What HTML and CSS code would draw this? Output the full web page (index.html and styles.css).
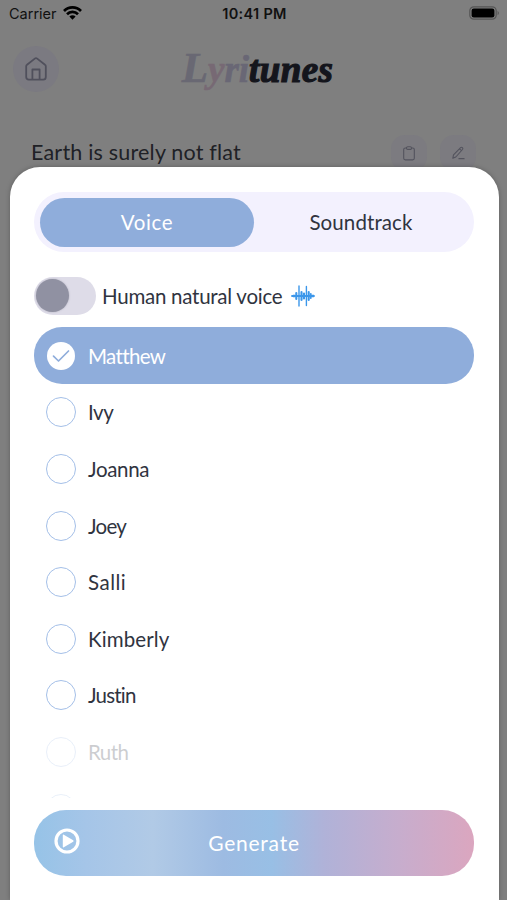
FILE: index.html
```html
<!DOCTYPE html>
<html lang="en">
<head>
<meta charset="utf-8">
<title>Lyritunes</title>
<link rel="stylesheet" href="styles.css">
</head>
<body>
<div class="page">
  <div class="status">
    <div class="carrier"><span>Carrier</span>
      <svg width="19" height="14" viewBox="0 0 19 14" fill="none" stroke="#000" stroke-width="2.7"><path d="M1 5a12 12 0 0 1 17 0M4 8.2a7.8 7.8 0 0 1 11 0"/><path d="M6.4 10.6a4.4 4.4 0 0 1 6.2 0L9.5 13.8z" fill="#000" stroke="none"/></svg>
    </div>
    <div class="time">10:41 PM</div>
    <svg class="battery" width="31" height="14" viewBox="0 0 31 14"><rect x=".8" y=".8" width="26.4" height="12.4" rx="4" fill="none" stroke="#555" stroke-width="1.2"/><rect x="2.6" y="2.6" width="22.8" height="8.8" rx="2.2"/><path d="M28.6 4.7q2.6 2.3 0 4.6z" fill="#555"/></svg>
  </div>
  <div class="header">
    <div class="home">
      <svg width="22" height="24" viewBox="0 0 22 24" fill="none" stroke="#50505c" stroke-width="1.8" stroke-linejoin="round"><path d="M1.2 9.3Q1.2 8.4 2 7.8L9.8 1.6q1.2-.9 2.4 0L20 7.8q.8.6.8 1.5V20q0 2.6-2.6 2.6H3.800Q1.2 22.6 1.2 20z"/><path d="M7.4 22.500V12.5h7.2v10"/></svg>
    </div>
    <div class="logo"><span class="logo-l">L</span><span class="logo-y">y</span><span class="logo-ri">ri</span><span class="logo-tunes">tunes</span></div>
    <div class="header-end"></div>
  </div>
  <div class="song">
    <div class="song-title">Earth is surely not flat</div>
    <div class="song-actions">
      <div class="mini"><svg width="12" height="15" viewBox="0 0 12 15" fill="none" stroke="#53535d" stroke-width="1.1"><path d="M3.5 2H2.3Q.7 2 .7 3.6v8.7q0 1.6 1.6 1.6h7.4q1.6 0 1.6-1.6V3.6Q11.3 2 9.7 2H8.5"/><rect x="3.5" y=".7" width="5" height="2.7" rx="1.2"/></svg></div>
      <div class="mini"><svg width="13" height="14" viewBox="0 0 13 14" fill="none" stroke="#53535d" stroke-width="1.1" stroke-linejoin="round"><path d="M.8 12.3l.7-3.400L8.600 1.600q.9-.8 1.800 0 .9.9.1 1.900L3.800 11zM7.500 2.800l2 1.800M6.500 12.600h6"/></svg></div>
    </div>
  </div>
</div>

<div class="sheet">
  <div class="tabs">
    <div class="tab tab-active"><span class="t-voice">Voice</span></div>
    <div class="tab"><span class="t-sound">Soundtrack</span></div>
  </div>
  <div class="natural">
    <div class="switch"><div class="knob"></div></div>
    <span class="t-human">Human natural voice</span>
    <svg class="wave" width="24" height="22" viewBox="0 0 24 22" fill="none" stroke="#3c97ea" stroke-linecap="round"><path stroke-width="1.8" d="M1 11h22M3 10.500v1M19.800 9v4M22 10.500v1"/><path stroke-width="2.100" d="M5.300 8v6M10.500 7v8M13 8.500v5M17.700 7v8"/><path stroke-width="1.400" d="M8 1v20M15.400 1.500v19"/></svg>
  </div>
  <div class="list">
    <div class="row row-on">
      <div class="radio radio-on"><svg width="18" height="14" viewBox="0 0 18 14" fill="none" stroke="#8faddb" stroke-width="1.7" stroke-linecap="round" stroke-linejoin="round"><path d="M1.5 7.200l5 4.800L16.500 2"/></svg></div>
      <span class="n-matthew">Matthew</span>
    </div>
    <div class="row"><div class="radio"></div><span class="n-ivy">Ivy</span></div>
    <div class="row"><div class="radio"></div><span class="n-joanna">Joanna</span></div>
    <div class="row"><div class="radio"></div><span class="n-joey">Joey</span></div>
    <div class="row"><div class="radio"></div><span class="n-salli">Salli</span></div>
    <div class="row"><div class="radio"></div><span class="n-kimberly">Kimberly</span></div>
    <div class="row"><div class="radio"></div><span class="n-justin">Justin</span></div>
    <div class="row row-faded"><div class="radio"></div><span class="n-ruth">Ruth</span></div>
    <div class="row row-faded"><div class="radio"></div></div>
  </div>
  <div class="generate">
    <svg width="26" height="26" viewBox="0 0 26 26"><circle cx="13" cy="13" r="11" fill="none" stroke="#fff" stroke-width="3.2"/><path d="M8.800 7.200q0-1 1-.5l9.400 5.600q.9.700 0 1.400l-9.400 5.600q-1 .5-1-.5z" fill="#fff"/></svg>
    <span class="t-generate">Generate</span>
  </div>
</div>
</body>
</html>
```
FILE: styles.css
```css
* { box-sizing: border-box; }
body {
  margin: 0;
  width: 507px;
  height: 900px;
  position: relative;
  overflow: hidden;
  background: #7f7f7f;
  font-family: Lato, "Open Sans", sans-serif;
  font-size: 20.5px;
  font-variant-ligatures: none;
  color: #30343f;
}
svg { display: block; flex: none; }
span { white-space: nowrap; }

.status {
  display: grid;
  grid-template-columns: 1fr auto 1fr;
  align-items: center;
  height: 28px;
  padding: 0 7px 0 9px;
  font: 14.5px/28px Inter, sans-serif;
  color: #111;
}
.carrier { display: flex; align-items: center; gap: 6px; }
.carrier svg { margin-top: -2px; }
.time { font-weight: 600; letter-spacing: 0.3px; }
.battery { justify-self: end; margin-top: -2px; }

.header {
  display: flex;
  align-items: center;
  justify-content: space-between;
  height: 82px;
  padding: 0 13px;
}
.home, .header-end { width: 46px; height: 46px; }
.home {
  display: flex;
  align-items: center;
  justify-content: center;
  border-radius: 50%;
  background: #7b7a81;
}
.logo {
  display: flex;
  align-items: baseline;
  font: italic bold 37px/46px "Liberation Serif", serif;
  color: #14151c;
  margin-left: 8px;
  -webkit-text-stroke: 0.6px currentColor;
}
.logo-l { font-size: 43px; color: #696873; }
.logo-y { color: #776974; }
.logo-ri { color: #696775; }
.logo-tunes { letter-spacing: 0.4px; -webkit-text-stroke-width: 1.2px; }

.song {
  display: flex;
  justify-content: space-between;
  align-items: center;
  height: 36px;
  margin-top: 25px;
  padding: 0 31px 0 32px;
}
.song-title {
  margin: -2px 0 0 -1px;
  font-size: 21.5px;
  letter-spacing: 0.2px;
  color: #202126;
}
.song-actions { display: flex; gap: 13px; }
.mini {
  display: flex;
  align-items: center;
  justify-content: center;
  width: 36px;
  height: 36px;
  border-radius: 14px;
  background: #7c7b80;
}

.sheet {
  position: absolute;
  left: 9.5px;
  top: 167px;
  width: 489px;
  height: 733px;
  padding: 25px 24.5px 0;
  border-radius: 30px 30px 0 0;
  background: #fff;
  box-shadow: 0 0 5px rgba(0, 0, 0, 0.25);
}
.tabs {
  display: flex;
  height: 60px;
  padding: 5.5px 6px;
  border-radius: 30px;
  background: #f3f1fe;
}
.tab {
  flex: 1;
  display: flex;
  align-items: center;
  justify-content: center;
  border-radius: 25px;
}
.tab-active { background: #8faddb; color: #fff; }
.t-voice { letter-spacing: 0.6px; }
.t-sound { letter-spacing: 0.1px; }

.natural {
  display: flex;
  align-items: center;
  height: 38px;
  margin-top: 25px;
}
.switch {
  width: 62px;
  height: 38px;
  margin-right: 6px;
  padding: 2px;
  border-radius: 19px;
  background: #dedce8;
}
.knob {
  width: 33px;
  height: 33px;
  border-radius: 50%;
  background: #9091a2;
  box-shadow: 0 0 2px #aaaab8;
}
.t-human { letter-spacing: -0.26px; }
.wave { margin-left: 9px; }

.list { height: 471px; margin-top: 12px; overflow: hidden; }
.row {
  display: flex;
  align-items: center;
  height: 56.6px;
  padding: 1px 0 0 12px;
  border-radius: 28px;
}
.row-on { background: #8faddb; color: #fff; }
.row-faded { opacity: 0.24; }
.radio {
  width: 30px;
  height: 30px;
  margin-right: 12px;
  border: 1.5px solid #a4bfe8;
  border-radius: 50%;
}
.radio-on {
  display: flex;
  align-items: center;
  justify-content: center;
  width: 28px;
  height: 28px;
  margin: 0 13px 0 1px;
  border: 0;
  background: #fff;
}
.n-matthew { letter-spacing: -0.65px; }
.n-ivy { letter-spacing: -0.4px; }
.n-joanna { letter-spacing: -0.35px; }
.n-joey { letter-spacing: -0.7px; }
.n-salli { letter-spacing: 0.5px; }
.n-kimberly { letter-spacing: 0.1px; }
.n-justin { letter-spacing: -0.8px; }
.n-ruth { letter-spacing: -0.6px; }

.generate {
  display: grid;
  grid-template-columns: 1fr auto 1fr;
  align-items: center;
  height: 65.5px;
  margin-top: 12px;
  padding: 0 20px;
  border-radius: 32px;
  background: linear-gradient(90deg, #96c3e7 0%, #a5c5e8 12%, #b1cae6 27%, #9dbbe2 43%, #98bfe5 54%, #b0b2d8 66%, #c7adcd 83%, #dba6bf 100%);
  color: #fff;
}
.generate svg { margin-top: -4px; }
.t-generate { font-size: 21px; letter-spacing: 0.75px; }
```
